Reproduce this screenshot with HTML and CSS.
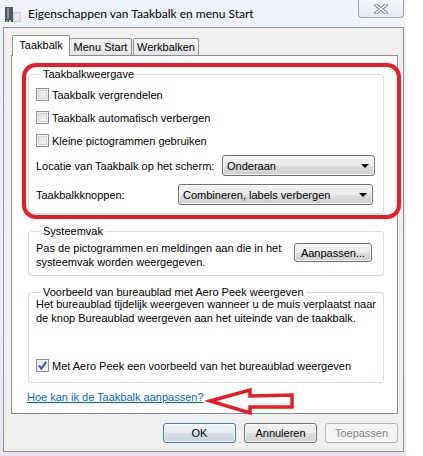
FILE: index.html
```html
<!DOCTYPE html>
<html lang="nl">
<head>
    <meta charset="UTF-8">
    <title>Eigenschappen van Taakbalk en menu Start</title>
    <link rel="stylesheet" href="styles.css">
</head>
<body>
    <div class="window">
        <!-- Title bar -->
        <div class="titlebar">
            <svg class="app-icon" width="17" height="17" viewBox="0 0 17 17">
                <rect x="0" y="1" width="8" height="15" fill="#55595f"/>
                <rect x="2" y="2" width="2" height="11" fill="#8a8f96"/>
                <rect x="8" y="6" width="8" height="10" fill="#c9cdd3"/>
                <rect x="9" y="7" width="6" height="8" fill="#e2e5e9"/>
                <rect x="0" y="13" width="8" height="3" fill="#2b4f8f"/>
                <rect x="1" y="14" width="2" height="2" fill="#58b848"/>
                <rect x="4" y="14" width="2" height="2" fill="#f2c230"/>
            </svg>
            <span class="title">Eigenschappen van Taakbalk en menu Start</span>
            <div class="close-btn">
                <svg width="14" height="10" viewBox="0 0 14 10">
                    <path d="M2 1 L12 9 M12 1 L2 9" stroke="#7d8592" stroke-width="3.4" stroke-linecap="square"/>
                    <path d="M2 1 L12 9 M12 1 L2 9" stroke="#ffffff" stroke-width="1.4" stroke-linecap="square"/>
                </svg>
            </div>
        </div>

        <!-- Dialog body -->
        <div class="client">
            <div class="tabs">
                <div class="tab active">Taakbalk</div>
                <div class="tab tab-menu">Menu Start</div>
                <div class="tab tab-toolbars">Werkbalken</div>
            </div>

            <div class="tab-panel">
                <div class="group group-display">
                    <div class="group-title">Taakbalkweergave</div>
                    <div class="check-row first"><span class="checkbox"></span>Taakbalk vergrendelen</div>
                    <div class="check-row"><span class="checkbox"></span>Taakbalk automatisch verbergen</div>
                    <div class="check-row"><span class="checkbox"></span>Kleine pictogrammen gebruiken</div>
                    <div class="combo-row first">
                        <span>Locatie van Taakbalk op het scherm:</span>
                        <div class="combo combo-location">Onderaan<span class="arrow"></span></div>
                    </div>
                    <div class="combo-row second">
                        <span>Taakbalkknoppen:</span>
                        <div class="combo combo-buttons">Combineren, labels verbergen<span class="arrow"></span></div>
                    </div>
                </div>

                <div class="group group-tray">
                    <div class="group-title">Systeemvak</div>
                    <div class="tray-row">
                        <p class="group-text">Pas de pictogrammen en meldingen aan die in het<br>systeemvak worden weergegeven.</p>
                        <div class="btn btn-customize">Aanpassen...</div>
                    </div>
                </div>

                <div class="group group-peek">
                    <div class="group-title">Voorbeeld van bureaublad met Aero Peek weergeven</div>
                    <p class="group-text peek-text">Het bureaublad tijdelijk weergeven wanneer u de muis verplaatst naar<br>de knop Bureaublad weergeven aan het uiteinde van de taakbalk.</p>
                    <div class="check-row peek-check">
                        <span class="checkbox checked">
                            <svg width="11" height="11" viewBox="0 0 11 11">
                                <path d="M2 5.5 L4.3 8.5 L9.2 1.8" stroke="#3a5795" stroke-width="2" fill="none"/>
                            </svg>
                        </span>Met Aero Peek een voorbeeld van het bureaublad weergeven
                    </div>
                </div>

                <a class="help-link" href="#">Hoe kan ik de Taakbalk aanpassen?</a>
            </div>

            <div class="dialog-buttons">
                <div class="btn btn-default">OK</div>
                <div class="btn">Annuleren</div>
                <div class="btn disabled">Toepassen</div>
            </div>
        </div>

        <!-- Red annotations drawn over the screenshot -->
        <div class="red-box"></div>
        <svg class="red-arrow" width="92" height="32" viewBox="0 0 92 32">
            <polygon points="5,16 45,5 45,11 87,10 87,22 45,22 45,28" fill="none" stroke="#ed1c24" stroke-width="3.5"/>
        </svg>
    </div>
</body>
</html>
```

FILE: styles.css
```css
/* Global */
* {
    margin: 0;
    padding: 0;
    box-sizing: border-box;
}

body {
    background-color: #ffffff;
    font-family: 'Liberation Sans', Arial, sans-serif;
    font-size: 11px;
    color: #000;
}

/* Window frame */
.window {
    position: relative;
    width: 406px;
    height: 456px;
    background: linear-gradient(#eef3fa, #e6ebf4 80%, #ebe3f0);
}

.titlebar {
    height: 27px;
    display: flex;
    align-items: flex-start;
}

.app-icon {
    margin: 6px 0 0 5px;
}

.title {
    margin: 6px 0 0 6px;
    font-family: 'Lato', 'Noto Sans', sans-serif;
    font-size: 12px;
    line-height: 16px;
    flex: 1;
}

.close-btn {
    width: 46px;
    height: 18px;
    margin-right: 2px;
    border: 1px solid #9aa3b3;
    border-top: none;
    border-radius: 0 0 4px 4px;
    background: linear-gradient(#f4f7fb, #e5eaf2);
    display: flex;
    align-items: center;
    justify-content: center;
}

/* Client area */
.client {
    width: 401px;
    margin-left: 3px;
    border: 1px solid #8e8f8f;
    background-color: #f0f0f0;
}

.tabs {
    height: 27px;
    padding-left: 8px;
    display: flex;
    align-items: flex-end;
}

.tab {
    height: 17px;
    border: 1px solid #898c95;
    border-bottom: none;
    border-radius: 2px 2px 0 0;
    background: linear-gradient(#f4f4f4, #e4e4e4);
    text-align: center;
    line-height: 16px;
}

.tab.active {
    width: 58px;
    height: 21px;
    margin-bottom: -1px;
    background: #ffffff;
    position: relative;
    line-height: 19px;
}

.tab-menu {
    width: 62px;
    border-left: none;
}

.tab-toolbars {
    width: 66px;
    margin-left: 1px;
}

.tab-panel {
    width: 387px;
    margin-left: 7px;
    border: 1px solid #898c95;
    background-color: #ffffff;
    padding: 0 13px 9px 16px;
}

/* Group boxes */
.group {
    border: 1px solid #d5dfe5;
    border-radius: 3px;
    padding: 0 8px 0 7px;
}

.group-title {
    width: fit-content;
    margin: -7px 0 0 5px;
    padding: 0 2px;
    background: #ffffff;
    line-height: 13px;
}

.group-display {
    margin-top: 18px;
    padding-bottom: 7px;
}

.group-tray {
    margin-top: 17px;
    padding-bottom: 6px;
}

.group-peek {
    margin-top: 16px;
    padding-bottom: 5px;
}

.check-row {
    height: 23px;
    display: flex;
    align-items: center;
    white-space: nowrap;
}

.check-row.first {
    margin-top: 2px;
}

.checkbox {
    width: 13px;
    height: 13px;
    margin-right: 3px;
    border: 1px solid #8f8f8f;
    background: linear-gradient(135deg, #dcdcdc, #f8f8f8);
    box-shadow: inset 0 0 0 1px #f4f4f4, inset 0 0 0 2px #d2d2d2;
    display: flex;
    align-items: center;
    justify-content: center;
}

.checkbox.checked {
    background: linear-gradient(135deg, #e2e6ee, #fafbfd);
    box-shadow: inset 0 0 0 1px #f4f4f4;
}

.combo-row {
    height: 23px;
    display: flex;
    align-items: center;
    justify-content: space-between;
}

.combo-row.first {
    margin-top: 2px;
}

.combo-row.second {
    margin-top: 6px;
}

.combo,
.btn {
    height: 21px;
    border: 1px solid #707070;
    border-radius: 3px;
    background: linear-gradient(#f2f2f2 0%, #ebebeb 50%, #dddddd 51%, #cfcfcf 100%);
    box-shadow: inset 0 0 0 1px rgba(255, 255, 255, 0.75);
}

.combo {
    display: flex;
    align-items: center;
    justify-content: space-between;
    padding: 0 5px 0 4px;
}

.combo-location {
    width: 153px;
}

.combo-buttons {
    width: 195px;
    margin-right: 2px;
}

.arrow {
    width: 0;
    height: 0;
    border-left: 4px solid transparent;
    border-right: 4px solid transparent;
    border-top: 4px solid #000;
}

.group-text {
    line-height: 14px;
    white-space: nowrap;
}

.tray-row {
    display: flex;
    justify-content: space-between;
    align-items: flex-start;
    margin-top: 3px;
}

.btn {
    display: flex;
    align-items: center;
    justify-content: center;
}

.btn-customize {
    width: 78px;
    height: 19px;
    margin: 2px 3px 0 0;
}

.peek-text {
    margin-top: -2px;
}

.peek-check {
    margin-top: 29px;
}

.help-link {
    display: block;
    width: fit-content;
    margin: 7px 0 0 -1px;
    line-height: 14px;
    color: #0066cc;
}

/* Bottom buttons */
.dialog-buttons {
    display: flex;
    justify-content: flex-end;
    gap: 8px;
    padding: 9px 5px 8px 0;
}

.dialog-buttons .btn {
    width: 73px;
    height: 20px;
}

.btn-default {
    border-color: #3c7fb1;
    background: linear-gradient(#eef3f7 0%, #e4ebf0 50%, #d5dee5 51%, #c9d3da 100%);
}

.btn.disabled {
    border-color: #adb2b5;
    background: #f4f4f4;
    box-shadow: none;
    color: #838383;
}

/* Annotations */
.red-box {
    position: absolute;
    left: 22px;
    top: 63px;
    width: 379px;
    height: 156px;
    border: 4px solid #ed1c24;
    border-radius: 14px;
}

.red-arrow {
    position: absolute;
    left: 205px;
    top: 385px;
}
```
